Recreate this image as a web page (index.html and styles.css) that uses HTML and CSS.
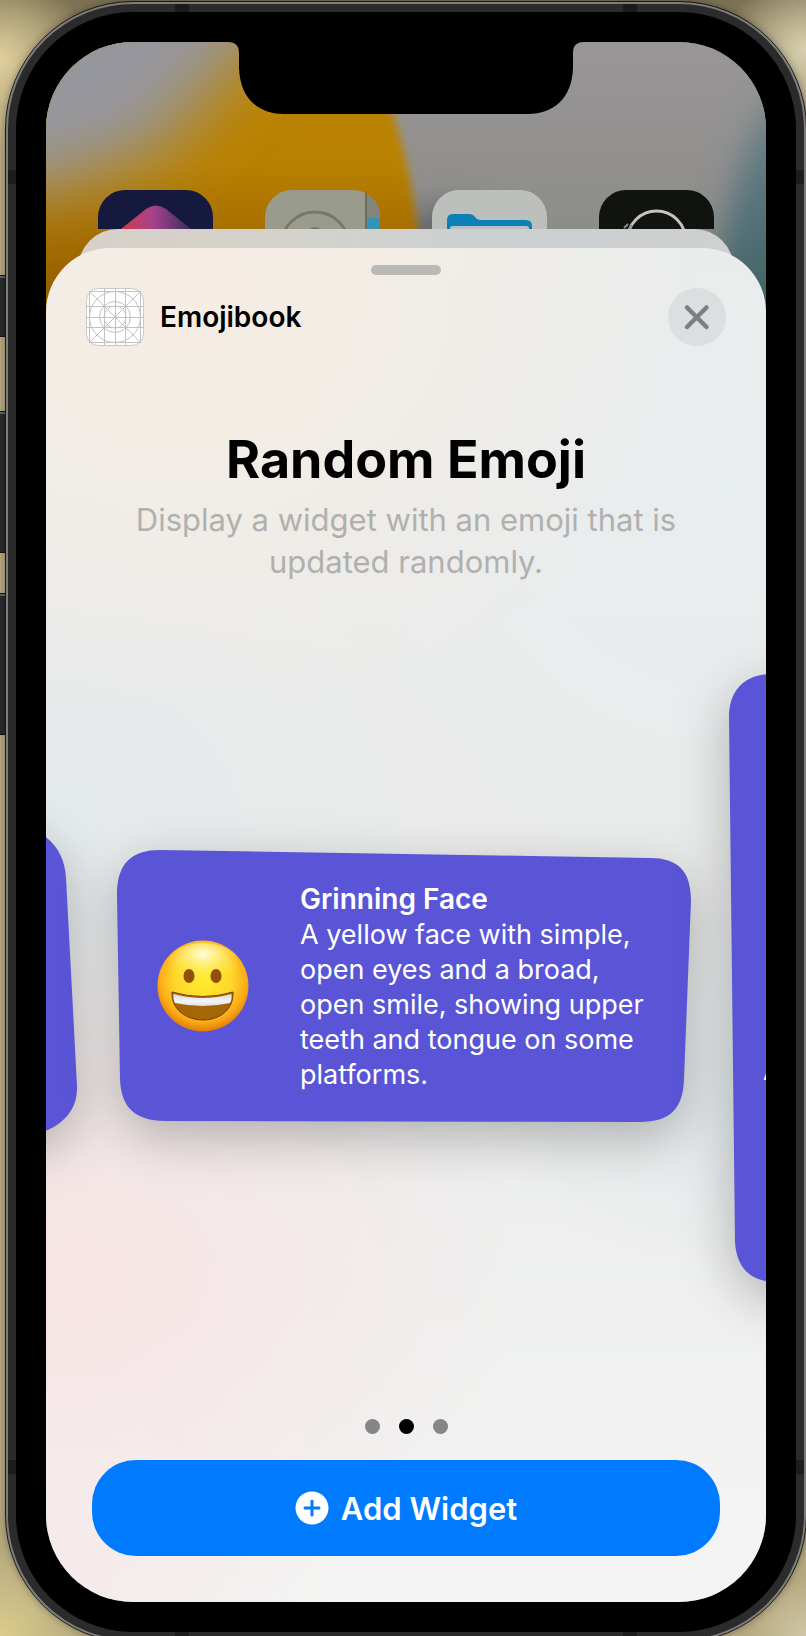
FILE: index.html
```html
<!DOCTYPE html>
<html lang="en">
<head>
<meta charset="utf-8">
<meta name="viewport" content="width=device-width, initial-scale=1">
<title>Emojibook</title>
<link rel="stylesheet" href="styles.css">
</head>
<body>
<div class="scene">
  <span class="key key-mute"></span>
  <span class="key key-up"></span>
  <span class="key key-down"></span>
  <div class="phone">
    <span class="band band-top band-left"></span>
    <span class="band band-top band-right"></span>
    <span class="band band-bottom band-left"></span>
    <span class="band band-bottom band-right"></span>
    <span class="band-side band-start side-upper"></span>
    <span class="band-side band-end side-upper"></span>
    <span class="band-side band-start side-lower"></span>
    <span class="band-side band-end side-lower"></span>
    <div class="bezel">
      <div class="screen">
        <svg class="wallpaper" viewBox="0 0 720 300" preserveAspectRatio="none" aria-hidden="true">
          <defs>
            <linearGradient id="grey" x1="0" y1="0" x2="0" y2="1"><stop offset="0" stop-color="#999697"/><stop offset=".6" stop-color="#8d8d8a"/><stop offset="1" stop-color="#70736f"/></linearGradient>
            <linearGradient id="amber" x1="0" y1="0" x2="0" y2="1"><stop offset="0" stop-color="#bd8602"/><stop offset=".45" stop-color="#b98100"/><stop offset=".75" stop-color="#9c6400"/><stop offset="1" stop-color="#8f4e00"/></linearGradient>
            <linearGradient id="teal" x1="0" y1="0" x2="0" y2="1"><stop offset="0" stop-color="#7d8a91"/><stop offset=".5" stop-color="#54737b"/><stop offset="1" stop-color="#385a58"/></linearGradient>
            <filter id="soft" x="-50%" y="-50%" width="200%" height="200%"><feGaussianBlur stdDeviation="4"/></filter>
            <filter id="wide" x="-80%" y="-80%" width="260%" height="260%"><feGaussianBlur stdDeviation="34"/></filter>
            <filter id="mid" x="-80%" y="-80%" width="260%" height="260%"><feGaussianBlur stdDeviation="16"/></filter>
          </defs>
          <rect width="720" height="300" fill="url(#grey)"/>
          <ellipse cx="400" cy="200" rx="50" ry="34" fill="#5f6468" filter="url(#mid)"/>
          <path d="M-40 -40H290C350 50 376 130 380 320H-40Z" fill="url(#amber)" filter="url(#soft)"/>
          <path d="M-120 -120H300L200 10 110 110 -10 150 -120 150Z" fill="#96969d" filter="url(#wide)"/>
          <path d="M760 0L725 60C695 110 675 170 660 320H780Z" fill="url(#teal)" filter="url(#mid)"/>
        </svg>
        <div class="apps" aria-hidden="true">
          <svg class="app" viewBox="0 0 115 115"><defs><linearGradient id="sc" x1="0" y1="0" x2="1" y2="0"><stop offset="0" stop-color="#d23c3c"/><stop offset=".45" stop-color="#a9428c"/><stop offset="1" stop-color="#2b2a55"/></linearGradient></defs><rect width="115" height="115" rx="27" fill="#14193d"/><path d="M18 43L48 19Q58 12 68 19L98 43 60 70Z" fill="url(#sc)"/></svg>
          <svg class="app" viewBox="0 0 115 115"><rect width="115" height="115" rx="27" fill="#999b8c"/><path d="M101 4Q115 10 115 28H101Z" fill="#84857a"/><path d="M101 28h14v40h-14z" fill="#3593b3"/><path d="M101 3v60" stroke="#6d6e62" stroke-width="2"/><circle cx="50" cy="56" r="34" fill="none" stroke="#77766a" stroke-width="3"/><circle cx="50" cy="46" r="9" fill="#77766a"/></svg>
          <svg class="app" viewBox="0 0 115 115"><rect width="115" height="115" rx="27" fill="#bdbfbc"/><path d="M15 60V30q0-6 6-6h16q4 0 6 3 2 3 5 3h46q6 0 6 6v24z" fill="#0d80b6"/><path d="M18 60V38q0-2 3-2h73q3 0 3 2v22z" fill="#b9bfc2"/></svg>
          <svg class="app" viewBox="0 0 115 115"><rect width="115" height="115" rx="27" fill="#11140e"/><circle cx="57.500" cy="50" r="29" fill="none" stroke="#c4c4c0" stroke-width="3"/><path d="M25 38l4-4M29 40l4-5" stroke="#8a8b86" stroke-width="2"/></svg>
        </div>
        <div class="sheet-back"></div>
        <main class="sheet">
          <span class="grabber"></span>
          <header class="sheet-header">
            <svg class="app-icon" viewBox="0 0 58 58" aria-hidden="true">
              <rect x=".5" y=".5" width="57" height="57" rx="12" fill="#fff" stroke="#c9c9c9"/>
              <g fill="none" stroke="#c2c2c4">
                <path d="M3.500 3V55M18.500 1V57M29.500 1V57M39.500 1V57M54.500 3V55M3 3.500H55M1 18.500H57M1 29.500H57M1 39.500H57M3 54.500H55M4 4L54 54M54 4L4 54"/>
                <circle cx="29" cy="29" r="25.500"/><circle cx="29" cy="29" r="15.500"/><circle cx="29" cy="29" r="11"/>
              </g>
            </svg>
            <p class="app-name">Emojibook</p>
            <button class="close" type="button" aria-label="Close">
              <svg viewBox="0 0 58 58" aria-hidden="true"><path d="M19 19.500L38.500 39M38.500 19.500L19 39" fill="none" stroke="#7d7e81" stroke-width="4.500" stroke-linecap="round"/></svg>
            </button>
          </header>
          <div class="intro">
            <h1 class="title">Random Emoji</h1>
            <p class="subtitle">Display a widget with an emoji that is updated randomly.</p>
          </div>
          <div class="carousel">
            <div class="card card-small">
              <svg class="card-shape" viewBox="0 0 576 300" preserveAspectRatio="none" aria-hidden="true"><path d="M0 -20L490 -16C539 -12 562 8 564 42L575 250C576 276 558 294 526 300L0 306Z"/></svg>
            </div>
            <article class="card card-medium">
              <svg class="card-shape" viewBox="0 0 576 276" preserveAspectRatio="none" aria-hidden="true"><path d="M-1 46C-1 14 14 1 42 1L532 9C560 9 573 22 573 52L566 232C565 262 552 275 522 275L47 274C17 274 3 260 2 232Z"/></svg>
              <svg class="emoji" viewBox="0 0 92 92" role="img" aria-label="Grinning Face emoji">
                <defs>
                  <radialGradient id="face" cx=".5" cy=".42" r=".58"><stop offset="0" stop-color="#ffec2e"/><stop offset=".55" stop-color="#fed62c"/><stop offset=".82" stop-color="#fbac18"/><stop offset="1" stop-color="#e27c05"/></radialGradient>
                  <radialGradient id="gloss" cx=".5" cy=".25" r=".6"><stop offset="0" stop-color="#fffde0"/><stop offset="1" stop-color="#fff04a" stop-opacity="0"/></radialGradient>
                  <linearGradient id="teeth" x1="0" y1="0" x2="0" y2="1"><stop offset="0" stop-color="#d5d8de"/><stop offset=".6" stop-color="#f4f5f7"/><stop offset="1" stop-color="#dcdfe4"/></linearGradient>
                </defs>
                <circle cx="46" cy="46" r="45.500" fill="url(#face)"/>
                <ellipse cx="46" cy="25" rx="35" ry="22" fill="url(#gloss)"/>
                <ellipse cx="32" cy="36" rx="5.500" ry="7" fill="#8f4f08"/><ellipse cx="59" cy="36" rx="5.500" ry="7" fill="#8f4f08"/>
                <path d="M15 52Q46 61 76 52C77 70 62 80 46 80S14 70 15 52Z" fill="#a56607" stroke="#7a4204" stroke-width="1"/>
                <path d="M16.500 54Q46 62 74.500 54Q75 60 73 63Q46 69 18 63Q16 60 16.500 54Z" fill="url(#teeth)"/>
              </svg>
              <div class="card-text">
                <h2 class="card-title">Grinning Face</h2>
                <p class="card-body">A yellow face with simple, open eyes and a broad, open smile, showing upper teeth and tongue on some platforms.</p>
              </div>
            </article>
            <div class="card card-large">
              <svg class="card-shape" viewBox="0 0 576 608" preserveAspectRatio="none" aria-hidden="true"><path d="M-5 42C-5 16 10 -1 38 -1L576 -4V612L40 607C16 606 2 592 1 566Z"/></svg>
              <p class="card-peek">A</p>
            </div>
          </div>
          <div class="dots" role="img" aria-label="Page 2 of 3">
            <span class="dot"></span><span class="dot dot-current"></span><span class="dot"></span>
          </div>
          <button class="add" type="button">
            <svg class="add-icon" viewBox="0 0 34 34" aria-hidden="true"><circle cx="17" cy="17" r="16.500" fill="#fff"/><path d="M17 10V24M10 17H24" stroke="#007aff" stroke-width="3" stroke-linecap="round"/></svg>
            Add Widget
          </button>
        </main>
        <svg class="notch" viewBox="0 0 356 72" aria-hidden="true"><path d="M0 0C8 0 11 4 11 11V26C12 56 30 72 56 72H300C326 72 344 56 345 26V11C345 4 348 0 356 0Z"/></svg>
      </div>
    </div>
  </div>
</div>
</body>
</html>
```
FILE: styles.css
```css
* { box-sizing: border-box; }

body {
  margin: 0;
  font-family: Inter, "Liberation Sans", sans-serif;
  color: #000;
}

h1, h2, p { margin: 0; }

button {
  border: 0;
  padding: 0;
  font: inherit;
  cursor: pointer;
}

.scene {
  position: relative;
  height: 100vh;
  overflow: hidden;
  padding: 2px 0 0 6px;
  background:
    radial-gradient(circle at 0 60px, #e0cf9c 0, transparent 90px),
    radial-gradient(circle at 100% 50px, #d8d0b0 0, transparent 80px),
    radial-gradient(circle at 0 100%, #dccc8c 0, transparent 90px),
    radial-gradient(circle at 100% 100%, #d0c6a8 0, transparent 60px),
    linear-gradient(#7c7152, #b5a97f 120px, #b5a97f);
}

.key {
  position: absolute;
  left: 0;
  width: 6px;
  background: #2b2b2b;
  border-top: 2px solid #66676a;
  box-shadow: 0 0 0 1px #111;
}
.key-mute { top: 276px; height: 60px; }
.key-up { top: 412px; height: 140px; }
.key-down { top: 594px; height: 140px; }

.phone {
  position: relative;
  min-height: calc(100vh + 4px);
  padding: 8px;
  display: flex;
  border: 2px solid #7d7d7d;
  outline: 1px solid #1a1a1a;
  border-radius: 127px;
  background: #2b2b2b;
  box-shadow: 0 0 10px rgba(0, 0, 0, .4);
}

.band, .band-side { position: absolute; background: #1c1c1c; }
.band { width: 14px; height: 8px; }
.band-top { top: 0; }
.band-bottom { bottom: 0; }
.band-left { left: 21%; }
.band-right { right: 21%; }
.band-side { width: 8px; height: 14px; }
.band-start { left: 0; }
.band-end { right: 0; }
.side-upper { top: 166px; }
.side-lower { bottom: 166px; }

.bezel {
  flex: 1;
  min-width: 0;
  display: flex;
  padding: 30px;
  border-radius: 117px;
  background: #000;
}

.screen {
  position: relative;
  flex: 1;
  min-width: 0;
  display: flex;
  flex-direction: column;
  overflow: hidden;
  border-radius: 87px;
  background: #8d8d8a;
}

.wallpaper {
  position: absolute;
  top: 0;
  left: 0;
  width: 100%;
  height: 300px;
}

.notch {
  position: absolute;
  top: 0;
  left: 50%;
  width: 356px;
  height: 72px;
  margin-left: -178px;
}

.apps {
  position: relative;
  display: flex;
  justify-content: space-between;
  height: 187px;
  padding: 148px 52px 0;
  overflow: hidden;
}
.app { width: 115px; height: 115px; }

.sheet-back {
  position: relative;
  flex: none;
  height: 60px;
  margin: 0 32px -41px;
  border-radius: 40px 40px 0 0;
  background: linear-gradient(90deg, #d6d0c9, #d4d2cc 35%, #cbd0d1 60%, #cfd0cf);
}

.sheet {
  position: relative;
  flex: 1;
  display: flex;
  flex-direction: column;
  padding: 17px 46px 46px;
  border-radius: 64px 64px 0 0;
  background:
    radial-gradient(ellipse 60% 26% at 5% 76%, #f8e4e4, transparent),
    radial-gradient(ellipse 70% 30% at 20% 4%, #f6ede3, transparent),
    radial-gradient(ellipse 60% 30% at 95% 18%, #e8edef, transparent),
    radial-gradient(ellipse 50% 20% at 0 42%, #e5eaeb, transparent),
    radial-gradient(ellipse 40% 14% at 100% 62%, #e2e8ea, transparent),
    radial-gradient(ellipse 40% 20% at 0 100%, #f6ebec, transparent),
    linear-gradient(#ececea, #eaebeb 50%, #f3f4f3);
}

.grabber {
  align-self: center;
  width: 70px;
  height: 10px;
  border-radius: 5px;
  background: #b9b9b8;
}

.sheet-header {
  display: flex;
  align-items: center;
  gap: 16px;
  margin: 13px -6px 0;
}
.app-icon { width: 58px; height: 58px; }
.app-name {
  flex: 1;
  font-size: 28px;
  line-height: 36px;
  font-weight: 600;
}
.close {
  width: 58px;
  height: 58px;
  border-radius: 50%;
  background: #dcdfe0;
}
.close svg { display: block; }

.intro {
  margin-top: 82px;
  text-align: center;
}
.title {
  font-size: 52px;
  line-height: 64px;
  font-weight: 700;
}
.subtitle {
  margin-top: 7px;
  font-size: 31px;
  line-height: 42px;
  color: #b0b0af;
}

.carousel {
  flex: 1;
  display: flex;
  align-items: center;
  justify-content: center;
  gap: 40px;
  margin: 0 -46px 30px;
  padding: 90px 0;
}
.card {
  position: relative;
  flex: 0 0 80%;
  color: #fff;
}
.card-shape {
  position: absolute;
  inset: 0;
  width: 100%;
  height: 100%;
  overflow: visible;
  fill: #5955d6;
  filter: drop-shadow(0 16px 26px rgba(0, 0, 0, .26));
}
.card-small { height: 300px; }
.card-medium {
  display: flex;
  align-items: center;
  gap: 51px;
  min-height: 274px;
  padding: 30px 32px 30px 39px;
}
.card-large {
  height: 608px;
  margin-bottom: 14px;
}
.emoji {
  position: relative;
  flex: none;
  width: 92px;
  height: 92px;
}
.card-text { position: relative; }
.card-title {
  font-size: 28px;
  line-height: 36px;
  font-weight: 600;
}
.card-body {
  font-size: 27px;
  line-height: 35px;
}
.card-peek {
  position: relative;
  padding: 377px 0 0 29px;
  font-size: 28px;
  line-height: 36px;
}

.dots {
  display: flex;
  justify-content: center;
  gap: 19px;
}
.dot {
  width: 15px;
  height: 15px;
  border-radius: 50%;
  background: #85858a;
}
.dot-current { background: #000; }

.add {
  display: flex;
  align-items: center;
  justify-content: center;
  gap: 12px;
  height: 96px;
  margin-top: 26px;
  border-radius: 44px;
  background: #007aff;
  color: #fff;
  font-size: 31px;
  font-weight: 600;
}
.add-icon { width: 34px; height: 34px; }
```
